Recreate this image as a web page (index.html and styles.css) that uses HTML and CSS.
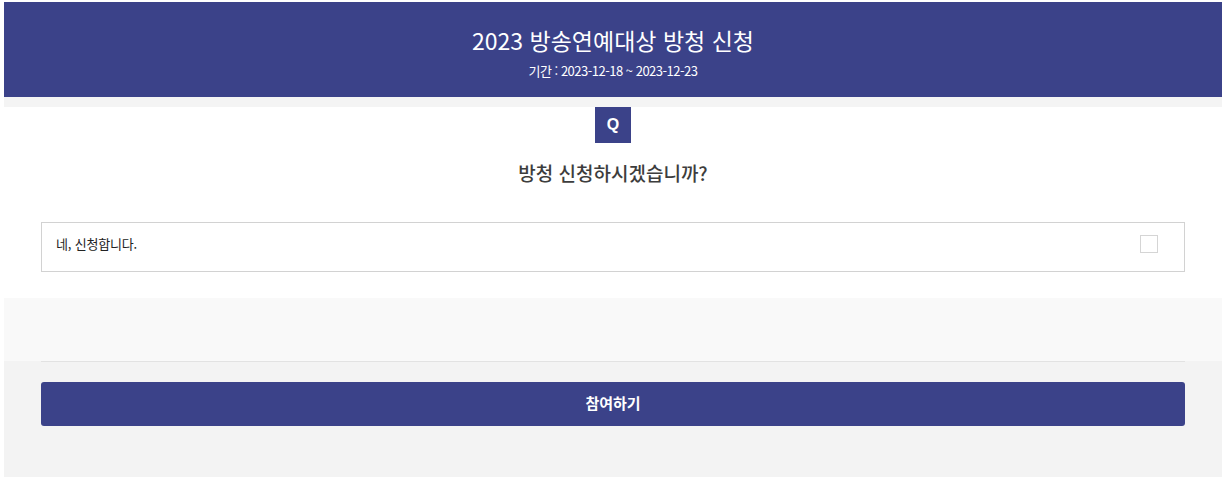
FILE: index.html
```html
<!DOCTYPE html>
<html lang="ko">
<head>
<meta charset="utf-8">
<title>2023 방송연예대상 방청 신청</title>
<link rel="stylesheet" href="styles.css">
</head>
<body>
<div class="page">
  <header class="header">
    <h1 class="title">2023 방송연예대상 방청 신청</h1>
    <p class="period">기간 : 2023-12-18 ~ 2023-12-23</p>
  </header>
  <div class="strip"></div>
  <main class="question">
    <div class="qbadge">Q</div>
    <h2 class="qtext">방청 신청하시겠습니까?</h2>
    <label class="option">
      <span class="option-text">네, 신청합니다.</span>
      <span class="check"></span>
    </label>
  </main>
  <div class="spacer"></div>
  <footer class="footer">
    <div class="footer-inner">
      <button class="submit">참여하기</button>
    </div>
  </footer>
</div>
</body>
</html>
```

FILE: styles.css
```css
html, body {
  margin: 0;
  padding: 0;
  background: #ffffff;
}
body {
  font-family: "Noto Sans CJK KR", "Noto Sans", sans-serif;
  color: #333;
}
.page {
  margin: 2px 3px 0 4px;
  width: 1218px;
}
.header {
  height: 95px;
  background: #3b4289;
  color: #fff;
  display: flex;
  flex-direction: column;
  align-items: center;
  box-sizing: border-box;
  padding-top: 22px;
}
.title {
  margin: 0;
  font-size: 23px;
  font-weight: 400;
  line-height: 32px;
  letter-spacing: 0;
}
.period {
  margin: 0;
  font-size: 13px;
  line-height: 19px;
  letter-spacing: -0.5px;
  padding-top: 5px;
}
.strip {
  height: 10px;
  background: #f4f4f4;
}
.question {
  display: flex;
  flex-direction: column;
  align-items: center;
  padding: 0 37px;
}
.qbadge {
  width: 36px;
  height: 36px;
  background: #3b4289;
  color: #fff;
  font-family: "Liberation Sans", "Noto Sans", sans-serif;
  font-weight: 700;
  font-size: 16px;
  display: flex;
  align-items: center;
  justify-content: center;
}
.qtext {
  margin: 17px 0 0;
  font-size: 19px;
  font-weight: 500;
  line-height: 26px;
  color: #3d3d3d;
}
.option {
  margin-top: 36px;
  align-self: stretch;
  height: 50px;
  box-sizing: border-box;
  border: 1px solid #d2d2d2;
  display: flex;
  align-items: flex-start;
  justify-content: space-between;
  padding: 11px 26px 0 14px;
}
.option-text {
  font-size: 13px;
  line-height: 19px;
  letter-spacing: -0.2px;
  color: #222;
}
.check {
  width: 18px;
  height: 18px;
  box-sizing: border-box;
  border: 1px solid #d5d5d5;
  background: #fff;
  margin-top: 1px;
}
.spacer {
  height: 26px;
}
.footer {
  background: linear-gradient(#f9f9f9 0, #f9f9f9 63px, #f3f3f3 63px);
  padding: 63px 37px 51px;
}
.footer-inner {
  border-top: 1px solid #e2e2e2;
  padding-top: 20px;
}
.submit {
  display: block;
  width: 100%;
  height: 44px;
  border: 0;
  border-radius: 3px;
  padding: 0 0 3px;
  background: #3b4289;
  color: #fff;
  font-family: "Noto Sans CJK KR", "Noto Sans", sans-serif;
  font-size: 15px;
  font-weight: 700;
  cursor: pointer;
}
```
